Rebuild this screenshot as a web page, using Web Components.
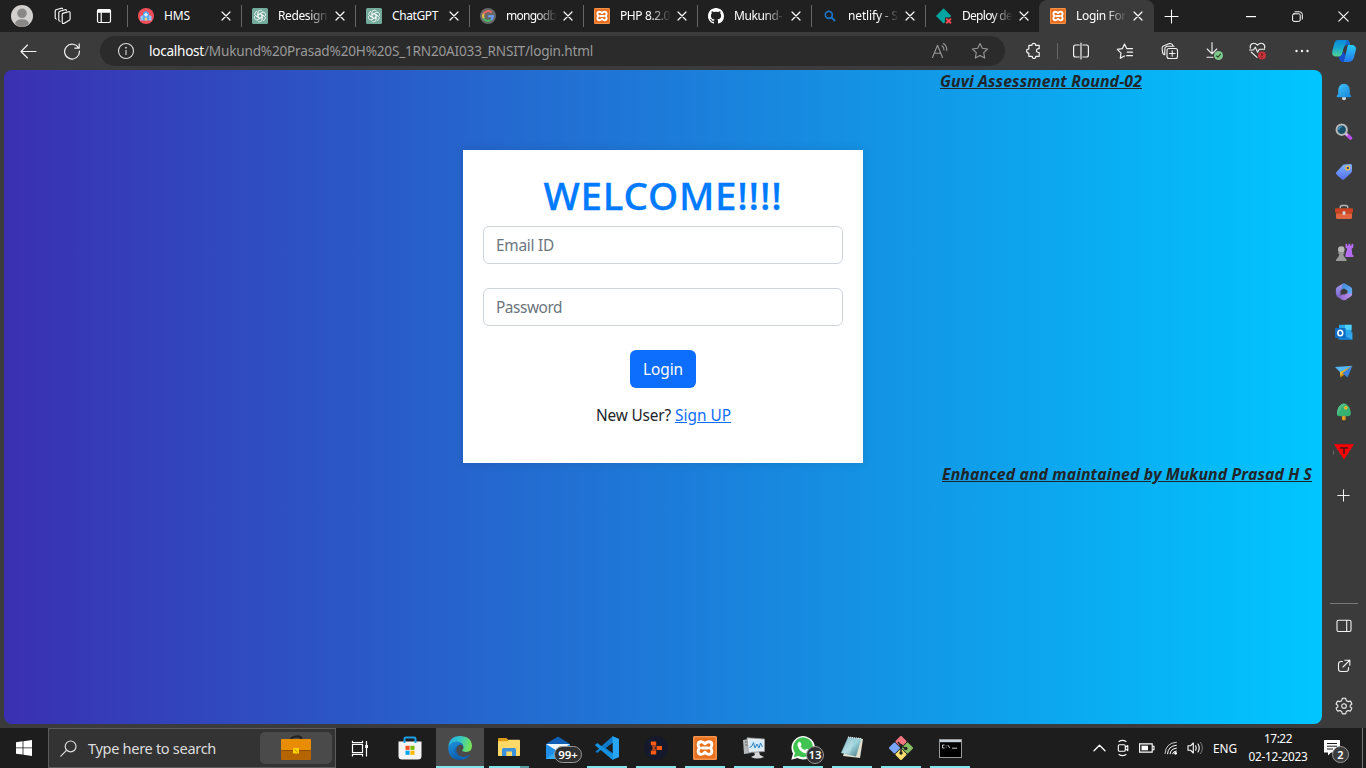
<!DOCTYPE html>
<html lang="en">
<head>
<meta charset="utf-8">
<title>Login Form</title>
<style>
html,body{margin:0;height:100%;overflow:hidden;background:#3b3b3b}
body{font-family:"Noto Sans","Open Sans",sans-serif}
</style>
</head>
<body>
<app-desktop></app-desktop>
<script>
const XAMPP = `<rect width="16" height="16" rx="1" fill="#e8701e"/><rect x=".5" y=".5" width="15" height="15" rx="1" fill="none" stroke="#f3934c"/><path d="M8 5.2Q7 3.8 5.5 3.8Q3.4 3.8 3.4 5.8Q3.4 7.2 4.5 8Q3.4 8.8 3.4 10.2Q3.4 12.2 5.5 12.2Q7 12.2 8 10.8Q9 12.2 10.5 12.2Q12.6 12.2 12.6 10.2Q12.6 8.8 11.5 8Q12.6 7.2 12.6 5.8Q12.6 3.8 10.5 3.8Q9 3.8 8 5.2ZM6.2 8H9.8" fill="none" stroke="#fff" stroke-width="1.9" stroke-linejoin="round" stroke-linecap="round"/>`;
const GPT = `<rect width="16" height="16" rx="1.5" fill="#74aa9c"/><g fill="none" stroke="#fff" stroke-width=".75" transform="translate(8 8)">${[0,60,120,180,240,300].map(a=>`<path transform="rotate(${a})" d="M-2 1.1V-3.6Q-1.9 -5.9 .5 -5.9Q1.9 -5.8 2.6 -4.7M-2 -1.2L1.9 -3.4"/>`).join('')}</g>`;
const L = (d, w=1.1, extra='') => `<g fill="none" stroke="currentColor" stroke-width="${w}" stroke-linecap="round" stroke-linejoin="round"><path d="${d}"/></g>${extra}`;

/* name: [width, height, markup] */
const ICONS = {
  close: [10,10,L('M1 1L9 9M9 1L1 9',1.2)],
  avatar: [22,22,`<circle cx="11" cy="11" r="11" fill="#d2d0ce"/><circle cx="11" cy="8.3" r="4.8" fill="#8a8886"/><path d="M4 18.6Q5 14.2 11 14.2T18 18.6Q15 22 11 22T4 18.6Z" fill="#8a8886"/>`],
  workspaces: [18,18,L('M9.4 6.1L14.7 4.7Q16.1 4.5 16.1 5.9V12Q16.1 12.9 15.3 13.3L9.9 16.4Q8.2 16.9 8.2 15.6V7.3Q8.2 6.3 9.4 6.1M6.1 14.2Q4.8 14.2 4.8 13V5.5Q4.8 4.6 5.8 4.3L11.1 2.7Q12.3 2.5 12.4 3.6M2.3 12Q1.2 12 1.2 10.8V4Q1.2 3.1 2 2.7L7.3 1.2Q8.3 1 8.6 1.9',1.1)],
  tabactions: [16,16,L('M3 1.5H13Q14.5 1.5 14.5 3V13Q14.5 14.5 13 14.5H3Q1.5 14.5 1.5 13V3Q1.5 1.5 3 1.5ZM5.2 4.5V14.5',1.2,`<rect x="1.5" y="1.5" width="13" height="3.2" rx="1" fill="currentColor"/>`)],
  hms: [16,16,`<circle cx="8" cy="8" r="8" fill="#f04f5a"/><path d="M2.5 12.5V8.2L5 7V12.5ZM11 12.5V7L13.5 8.2V12.5Z" fill="#8ec8ff"/><path d="M5 12.5V5L8 2.8L11 5V12.5Z" fill="#53a7f5"/><path d="M7.3 5H8.7V8.5H7.3ZM6.2 6H9.8V7.4H6.2Z" fill="#e8f4ff"/><rect x="6.7" y="9.7" width="2.6" height="2.8" fill="#f7d26a"/>`],
  gpt: [16,16,GPT],
  google: [16,16,`<circle cx="8" cy="8" r="8" fill="#686868"/><g fill="none" stroke-width="2"><path d="M11.6 4.7A4.9 4.9 0 0 0 3.6 5.8" stroke="#ea6a60"/><path d="M3.6 5.8A4.9 4.9 0 0 0 3.6 10.2" stroke="#efc344"/><path d="M3.6 10.2A4.9 4.9 0 0 0 11.2 11.7" stroke="#4ab866"/><path d="M11.2 11.7A4.9 4.9 0 0 0 12.9 8.3H8.2" stroke="#6aa0f8"/></g>`],
  xampp: [16,16,XAMPP],
  github: [16,16,`<path fill="#fff" d="M8 0C3.58 0 0 3.58 0 8c0 3.54 2.29 6.53 5.47 7.59.4.07.55-.17.55-.38 0-.19-.01-.82-.01-1.49-2.01.37-2.53-.49-2.69-.94-.09-.23-.48-.94-.82-1.13-.28-.15-.68-.52-.01-.53.63-.01 1.08.58 1.23.82.72 1.21 1.87.87 2.33.66.07-.52.28-.87.51-1.07-1.78-.2-3.64-.89-3.64-3.95 0-.87.31-1.59.82-2.15-.08-.2-.36-1.02.08-2.12 0 0 .67-.21 2.2.82.64-.18 1.32-.27 2-.27s1.36.09 2 .27c1.53-1.04 2.2-.82 2.2-.82.44 1.1.16 1.92.08 2.12.51.56.82 1.27.82 2.15 0 3.07-1.87 3.75-3.65 3.95.29.25.54.73.54 1.48 0 1.07-.01 1.93-.01 2.2 0 .21.15.46.55.38A8.01 8.01 0 0 0 16 8c0-4.42-3.58-8-8-8z"/>`],
  bing: [16,16,`<g fill="none" stroke="#1a73c8" stroke-width="1.7"><circle cx="6.8" cy="6.8" r="3.5"/><path d="M9.4 9.4L13 13" stroke-width="2"/></g>`],
  netlify: [16,16,`<path d="M7.6 .3L15.2 7.9L7.6 15.5L0 7.9Z" fill="#05a6a1"/><path d="M9 9.5H16V16H9Z" fill="#212121"/><path d="M10.2 10.6L15 15.2M15 10.6L10.2 15.2" stroke="#ff4b55" stroke-width="1.9"/>`],
  plus: [15,15,L('M7.5 1V14M1 7.5H14',1.1)],
  plusSmall: [13,13,L('M6.5 .8V12.2M.8 6.5H12.2',1)],
  min: [11,11,'<rect x="0" y="5" width="10" height="1.2" fill="currentColor"/>'],
  restore: [11,11,L('M2 2.8H6.8Q8.2 2.8 8.2 4.2V9Q8.2 10.4 6.8 10.4H2Q.6 10.4 .6 9V4.2Q.6 2.8 2 2.8ZM3 .8H7.5Q10.3 .8 10.3 3.5V8',1)],
  wclose: [11,11,L('M.8 .8L10.2 10.2M10.2 .8L.8 10.2',1.1)],
  back: [17,15,L('M16 7.5H1M7.5 1L1 7.5L7.5 14',1.1)],
  reload: [18,18,L('M15.6 6.2A7.4 7.4 0 1 0 16.4 9M16.2 1.8V6.2H11.8',1.2)],
  info: [18,18,L('M16.5 9A7.5 7.5 0 1 1 1.5 9A7.5 7.5 0 1 1 16.5 9M9 8.2V12.5',1.1,'<circle cx="9" cy="5.7" r=".9" fill="currentColor"/>')],
  read: [18,18,L('M1.5 15.5L6.5 3.2L11.5 15.5M3.2 11.2H9.8M11 3.8Q13 5.2 13 8M12.5 1.5Q16 4 15.8 8.5',1.1)],
  star: [18,18,L('M9 1.5L11.3 6.3L16.5 7L12.7 10.7L13.7 16L9 13.5L4.3 16L5.3 10.7L1.5 7L6.7 6.3Z',1.1)],
  puzzle: [18,18,L('M4 3.3H7Q6.8 1.3 8.8 1.3T10.6 3.3H14.2V6.7Q12 6.3 11.5 8Q11.2 10.5 14.2 10.6V14.3H10.8Q10.8 16.5 9 16.5T7.2 14.3H3.8V11Q1.6 11 1.6 9T3.8 7.1V3.5',1.2)],
  split: [18,18,L('M7.2 3H3.5Q1.6 3 1.6 5V13Q1.6 15 3.5 15H7.2M10.8 3H14.5Q16.4 3 16.4 5V13Q16.4 15 14.5 15H10.8M9 1V17',1.2)],
  favs: [18,18,L('M8.5 14L4.3 16.3L5 11.2L1.3 7.4L6.3 6.7L8.5 2L10.8 6.7H16.5M11.3 10.2H16.5M10.7 13.7H16.5',1.2)],
  collections: [18,18,L('M8 6.5H14.5Q16.5 6.5 16.5 8.5V14.5Q16.5 16.5 14.5 16.5H8Q6 16.5 6 14.5V8.5Q6 6.5 8 6.5ZM11.2 8.8V14.2M8.5 11.5H14M3.6 12.8Q2 12.2 1.6 10.5L1.1 6.5Q1 4.2 3 3.8L8.5 1.6Q11 1 12 3.8M3.8 12.5V7.2Q3.8 4.2 7 4.2H13',1.1)],
  download: [20,20,L('M8 1.5V12.5M3.2 8L8 12.8L12.8 8M3 16.3H9',1.1,'<circle cx="14.5" cy="14.5" r="4.5" fill="#7fc98b"/><path d="M12.3 14.6L13.9 16.2L16.8 12.9" fill="none" stroke="#25452b" stroke-width="1.1"/>')],
  heart: [20,20,L('M2.4 7.2Q1.5 4.2 4 2.7Q7 1.4 9.5 4.2Q12 1.4 15 2.7Q17.5 4.2 16.6 7.2M1.5 9H5.5L7.3 6.2L9.6 11.2L11.3 8.2H16.5M3.2 11L9 16.3',1.1,'<circle cx="14" cy="14.5" r="4" fill="#c4323a"/><path d="M14 12.2V15" stroke="#411" stroke-width="1"/><circle cx="14" cy="16.5" r=".6" fill="#411"/>')],
  more: [16,4,'<circle cx="2.5" cy="2" r="1.2" fill="currentColor"/><circle cx="8" cy="2" r="1.2" fill="currentColor"/><circle cx="13.5" cy="2" r="1.2" fill="currentColor"/>'],
  copilot: [24,24,`<defs><linearGradient id="a" x2="0" y2="1"><stop stop-color="#0b8ad8"/><stop offset=".5" stop-color="#18a9ce"/><stop offset="1" stop-color="#54d68d"/></linearGradient><linearGradient id="b" x2="0" y2="1"><stop stop-color="#28c9f2"/><stop offset="1" stop-color="#2379ec"/></linearGradient></defs><path d="M15.8 6H20Q24.6 6.4 23.9 11L21.9 18.5Q20.7 22.9 16.8 22.9H11.5L13.6 15Z" fill="url(#b)"/><path d="M5.8 1H14.8Q17.6 1.2 18.2 6H15.6Q12.7 6 11.8 9.2L10.3 14.5Q9.4 17.6 6.5 17.6H4Q-.6 17.2.3 12.6L2.2 4.8Q3.1 1.2 5.8 1Z" fill="url(#a)"/><path d="M14.8 1Q17.6 1.2 18.2 6H15.6Q13.5 6 12.4 7.5Z" fill="#1567cd"/><path d="M6.5 17.6Q9.4 17.6 10.3 14.5L11 12.2L13.5 15.5L11.5 22.9H10.2Q7.6 22.6 6.5 17.6Z" fill="#1550cc"/><path d="M11.8 9.2L12.4 7.5Q13.6 6 15.6 6L13.5 15.5L11 12.2Z" fill="#3b3b3b"/>`],
  bell: [16,18,`<defs><linearGradient id="a" x2="1" y2="1"><stop stop-color="#40c4f7"/><stop offset="1" stop-color="#1683d8"/></linearGradient></defs><circle cx="8" cy="15.3" r="2" fill="#d8d8d8"/><path d="M8 .8Q13.8 1.2 13.8 8V11L15.3 13Q15.5 14.3 14.3 14.3H1.7Q.5 14.3 .7 13L2.2 11V8Q2.2 1.2 8 .8Z" fill="url(#a)"/>`],
  search3d: [18,18,`<path d="M11 11L15.5 15" stroke="#b94ee8" stroke-width="3.6" stroke-linecap="round"/><path d="M10 10L12.5 12.3" stroke="#ccc" stroke-width="2"/><circle cx="6.7" cy="6.7" r="5.2" fill="#1b5069" stroke="#b9b9b9" stroke-width="2"/><path d="M3.6 6.8Q4 4 6.8 3.6" stroke="#3d9ccc" fill="none" stroke-width="1.4"/>`],
  tag: [18,18,`<defs><linearGradient id="a" x2="0" y2="1"><stop stop-color="#80b2ff"/><stop offset="1" stop-color="#5471ed"/></linearGradient></defs><path d="M9.5 1.6L15.4 1Q17 1 17 2.6V7.6Q17 9 16 10L9.3 16.3Q8 17.3 6.7 16.2L1.5 11.5Q.4 10.3 1.5 9L7.5 2.5Q8.3 1.7 9.5 1.6Z" fill="url(#a)"/><circle cx="12.8" cy="5" r="1.9" fill="#3548a8" stroke="#f5c63b" stroke-width="1.3"/>`],
  toolbox: [18,16,`<path d="M5.3 4.5V3.2Q5.3 1.6 7 1.6H11Q12.7 1.6 12.7 3.2V4.5" fill="none" stroke="#b6b6b6" stroke-width="1.5"/><rect x="1" y="8" width="16" height="7" rx="1.2" fill="#e1643e"/><path d="M1.2 4.3H16.8Q18 4.3 18 5.5V8.3H0V5.5Q0 4.3 1.2 4.3Z" fill="#cd4322"/><path d="M.5 9H17.5" stroke="#a93318"/><rect x="7.6" y="7.3" width="2.8" height="3.6" rx=".8" fill="#cfd6da"/>`],
  chess: [19,19,`<path d="M10.5 .8H12V2.4H13.4V.8H15.2V2.4H16.6V.8H18.3V4.4L16.6 5.8L17.4 12H18.4V14H10.4V12L12.2 5.8L10.5 4.4Z" fill="#b66cf0"/><circle cx="6.3" cy="6.5" r="3.3" fill="#b7b7b7"/><path d="M3.2 9.2H9.4V10.8H8.3Q8.4 13.5 10.3 15.2Q11.6 16 11.6 18H1Q1 16 2.3 15.2Q4.2 13.5 4.3 10.8H3.2Z" fill="#999"/>`],
  m365: [18,18,`<defs><linearGradient id="a" x2="0" y2="1"><stop stop-color="#a79bef"/><stop offset="1" stop-color="#7a66d0"/></linearGradient><linearGradient id="c" x2="1"><stop stop-color="#7a5fcb"/><stop offset="1" stop-color="#c693ea"/></linearGradient><linearGradient id="b" x2="1" y2="1"><stop stop-color="#3e86d8"/><stop offset="1" stop-color="#6bb0f5"/></linearGradient></defs><path d="M9.5 .4L6.3 7Q5.6 8 5.6 9V12.2L3.2 13.6Q.9 12.6 .9 10.5V6.3Q.9 4.8 2.3 3.9L7.2 .9Q8.3 .3 9.5 .4Z" fill="url(#a)"/><path d="M7.6 .8Q9 .1 10.3 .8L15.8 4Q17.1 4.8 17.1 6.3V11Q17 12.4 15.5 13L12.4 11.4V7.7L8.9 5.6L6 7.2Z" fill="url(#b)"/><path d="M1.3 12.2Q3 13.7 5.3 12.5L12.4 8.8V11.2L17 10.5Q17 12.7 15.8 13.5L10.4 16.9Q9 17.7 7.6 16.9L2.6 13.9Q1.6 13.2 1.3 12.2Z" fill="url(#c)"/><path d="M9 5.8L12.2 7.6V9.9L9 11.8L5.8 10.6V7.6Z" fill="#3b3b3b"/>`],
  outlook: [18,17,`<rect x="4" y=".8" width="12.5" height="12" fill="#28a8ea"/><rect x="10" y=".8" width="6.5" height="5" fill="#50d1fa"/><path d="M3.5 9L10 12L17.3 8.2V15.8H3.5Z" fill="#1383da"/><path d="M17.3 8.2V15.8L10.5 12Z" fill="#35a9ef"/><rect x="0" y="4" width="10.6" height="10" rx="1" fill="#0c6cc4"/><ellipse cx="5.3" cy="9" rx="2.4" ry="2.7" fill="none" stroke="#fff" stroke-width="1.6"/>`],
  plane: [18,14,`<path d="M0 2L17.5 .8L5.2 7.3Z" fill="#54b7f5"/><path d="M17.5 .8L4.8 7.3L5.6 12.6L8 8.5Z" fill="#f4b52a"/><path d="M17.5 .8L7.5 8L12.5 12.5Z" fill="#3b82df"/><path d="M5.6 12.6L7.5 8L9.3 9.7Z" fill="#c98a13"/>`],
  tree: [16,18,`<rect x="6" y="11" width="3.6" height="6.3" rx="1" fill="#e89b22"/><path d="M8 .5Q12.5 1 14.3 7Q16 13.2 12 13.2H3.6Q-.2 13.2 1.5 7Q3.3 1 8 .5Z" fill="#36b172"/><path d="M8 .5Q3.3 1 1.5 7Q.2 11.6 2 12.8Q3.5 5 10 1.2Z" fill="#4dbf87"/><path d="M9.8 2.6L12 4.8L9.8 7L7.6 4.8Z" fill="#ffc938"/><circle cx="9.8" cy="4.8" r=".8" fill="#c17b12"/>`],
  tri: [22,18,`<path d="M.5 7.5V11.5" stroke="#777" stroke-width=".8"/><path d="M1 1.2H21L11 16.5Z" fill="#fb0006"/><path d="M7 4H15V5.8H12V11H10V5.8H7Z" fill="#611"/>`],
  panel: [16,14,L('M2.5 1.3H13.5Q15 1.3 15 2.8V11Q15 12.5 13.5 12.5H2.5Q1 12.5 1 11V2.8Q1 1.3 2.5 1.3ZM10.7 1.3V12.5',1.1)],
  ext: [14,14,L('M5.5 2.5H4Q1.5 2.5 1.5 5V10Q1.5 12.5 4 12.5H9Q11.5 12.5 11.5 10V8.5M7.8 1.2H12.8V6.2M12.8 1.2L6 8',1.1)],
  gear: [18,18,L('M7.3 1.4Q9 1 10.7 1.4L11.3 3.7L13 4.6L15.2 4Q16.4 5.2 16.9 7L15.2 8.4V9.8L16.9 11.2Q16.4 12.9 15.2 14.1L13 13.5L11.4 14.4L10.7 16.7Q9 17.1 7.3 16.7L6.6 14.4L5 13.5L2.8 14.1Q1.6 12.9 1.1 11.2L2.8 9.8V8.4L1.1 7Q1.6 5.2 2.8 4L5 4.6L6.7 3.7ZM11.3 9A2.3 2.3 0 1 1 6.7 9A2.3 2.3 0 1 1 11.3 9',1.1)],
  windows: [16,16,`<path d="M0 2.3L6.6 1.3V7.5H0ZM7.4 1.2L16 0V7.5H7.4ZM0 8.3H6.6V14.6L0 13.7ZM7.4 8.3H16V16L7.4 14.8Z" fill="#fff"/>`],
  find: [17,17,L('M16 6.4A5.4 5.4 0 1 1 5.2 6.4A5.4 5.4 0 1 1 16 6.4M6.7 10.2L.8 16.1',1.2)],
  briefcase: [32,26,`<path d="M11 4Q11.5 2.2 16 1.5Q21 1 21.5 4" fill="none" stroke="#222" stroke-width="2.2"/><rect x="1" y="4" width="30" height="21" rx="1" fill="#b56500"/><path d="M1 5Q1 4 2 4H30Q31 4 31 5V15H1Z" fill="#e88c00"/><path d="M1 15.5H31" stroke="#8f4e00"/><rect x="13" y="13" width="6" height="5.5" rx=".7" fill="#ffd400"/><path d="M14.5 14.5L17.5 17" stroke="#c98a00"/>`],
  taskview: [18,17,`<g fill="none" stroke="#fff" stroke-width="1.2"><path d="M1.5 4.5H11.5V12.5H1.5ZM1.5 .8V2.7H11.5V.8M1.5 16.4V14.4H11.5V16.4M15.5 1V16.5"/></g><rect x="14.2" y="5" width="2.8" height="3" fill="#fff"/>`],
  store: [24,24,`<path d="M6.5 7V2.8Q6.5 1.5 7.8 1.5H16.2Q17.5 1.5 17.5 2.8V7" fill="none" stroke="#1da0e8" stroke-width="2"/><path d="M.5 5.5H23.5V20Q23.5 23.5 20 23.5H4Q.5 23.5 .5 20Z" fill="#f4f4f4"/><path d="M7.5 9.8H11.6V13.9H7.5Z" fill="#f25022"/><path d="M12.4 9.8H16.5V13.9H12.4Z" fill="#7fba00"/><path d="M7.5 14.7H11.6V18.8H7.5Z" fill="#00a4ef"/><path d="M12.4 14.7H16.5V18.8H12.4Z" fill="#ffb900"/><path d="M6.5 5V7M17.5 5V7" stroke="#1da0e8" stroke-width="2"/>`],
  edge: [24,24,`<defs><linearGradient id="a" x2="1" y2=".2"><stop stop-color="#29a9e8"/><stop offset=".5" stop-color="#32c6ca"/><stop offset="1" stop-color="#73e25a"/></linearGradient><linearGradient id="b" x2=".6" y2="1"><stop stop-color="#1c93dd"/><stop offset="1" stop-color="#0c55a5"/></linearGradient></defs><path d="M.3 11Q1 .2 12 0Q23.6.4 24 10Q23.8 15.8 18 16Q14.5 16 14 14.6Q15.7 13.2 15.5 11Q14.6 6 9 5.8Q3.4 5.8.3 11Z" fill="url(#a)"/><path d="M.2 11.5Q3 5.5 9.3 5.8Q14 6 15.4 10Q12.5 7.8 10 9.7Q6.6 12.5 9 17.8Q13 24 20 19.6L22.3 18.3Q18.5 24 12 24Q.2 23.5.2 11.5Z" fill="url(#b)"/><path d="M9.5 10Q7 13 9 17.8Q13 23 20 19.6L22 18.6Q19.5 22.5 15.5 23.4Q7 23 6.4 16Q6.4 12 9.5 10Z" fill="#1066b6"/>`],
  explorer: [22,20,`<path d="M0 1Q0 0 1 0H8.5L10.5 2H21Q22 2 22 3V17Q22 18 21 18H1Q0 18 0 17Z" fill="#dc9c15"/><path d="M0 3.3H9L11 1.8H21Q22 1.8 22 3V17Q22 18 21 18H1Q0 18 0 17Z" fill="#ffd968"/><path d="M4 18V11.5Q4 10 5.5 10H16.5Q18 10 18 11.5V18H14V13.5H8.3V18Z" fill="#3a92dc"/>`],
  mail: [26,24,`<path d="M1 8L13 .5L25 8V22H1Z" fill="#1160b5"/><path d="M1 8L13 15.5L25 8V23H1Z" fill="#1f8fe8"/><path d="M1 8H25L13 15.5Z" fill="#f1f7fd"/><path d="M1 23L13 14L25 23Z" fill="#35adf3"/>`],
  vscode: [24,24,`<path d="M17.5 .3L24 3V21L17.5 23.8L6.5 13.6L2.3 17L.3 15.8L15.5 2Z" fill="#0f79c7"/><path d="M17.5 .3L24 3V21L17.5 23.8Z" fill="#28a5f2"/><path d="M17.7 6.7V17.2L10.8 12Z" fill="#1d1d1d"/><path d="M.3 8.4L2.3 7L17.5 18.5V23.8L.3 9.6Z" fill="#1693e0"/>`],
  orange: [24,24,`<circle cx="12" cy="12" r="12" fill="#15192b"/><path d="M6.8 5.4H12.2V9.3H6.8ZM6.8 14.6H12.2V18.6H6.8ZM12.6 9.9H18V14H12.6Z" fill="#ff5a14"/><path d="M8 9.3H12.2V10.4L10.5 12L12.2 13.5V14.6H8L8.6 12Z" fill="#c2461a"/>`],
  xamppBig: [24,24,`<g transform="scale(1.5)">${XAMPP}</g>`],
  monitor: [24,22,`<path d="M1 3L7 2L9 16L2 17Z" fill="#b5b8ba"/><path d="M3 5H7M3 8H7" stroke="#666"/><path d="M5 .8L22.5 2V14.5L6.5 15.5Z" fill="#e9ecee" stroke="#92979b" stroke-width=".8"/><path d="M7 3L20.8 3.8V12.8L8 13.5Z" fill="#d6ebf8"/><path d="M7.5 10.5L10 9L11.5 5.5L13 11L15 7L17 11L18.5 6L20.5 10" fill="none" stroke="#2a7ec2"/><path d="M12 15.5L17 15L18 18L22 20Q15 23 9 20L13 18Z" fill="#d4d6d8"/>`],
  whatsapp: [24,24,`<path d="M.3 23.7L2 17.6A11.7 11.7 0 1 1 6.4 22Z" fill="#fff"/><path d="M2.8 21.2L4 17A9.9 9.9 0 1 1 7.4 20Z" fill="#41c351"/><path d="M8 5.8Q9.3 5.2 10 7.2L10.5 8.7Q10.4 9.6 9.5 10.2Q10.9 13 14 14L15.3 12.8Q16 12.5 18.5 14.2Q18.8 17.3 15.7 17.6Q8.7 16.8 6.5 9.6Q6.3 7 8 5.8Z" fill="#fff"/>`],
  notepad: [24,24,`<defs><linearGradient id="a" x2="1" y2="1"><stop stop-color="#6da5b3"/><stop offset=".5" stop-color="#9fd5dd"/><stop offset="1" stop-color="#3d7380"/></linearGradient></defs><path d="M9 1.5L23 3L20 22L3 20Z" fill="#e2e0cf"/><path d="M8 1L21.5 2.5L16 20.5L1 17Z" fill="url(#a)"/><path d="M8 1.2L21.5 2.7" stroke="#dfe8e8" stroke-width="1.4" stroke-dasharray="1 1"/><path d="M8.5 2L2 16.5L10 18.3L14 4Z" fill="#fff" opacity=".2"/>`],
  git: [24,24,`<g transform="rotate(45 12 12)"><rect x="3.2" y="3.2" width="8.4" height="8.4" rx="1" fill="#f47681"/><rect x="12.4" y="3.2" width="8.4" height="8.4" rx="1" fill="#86bd62"/><rect x="3.2" y="12.4" width="8.4" height="8.4" rx="1" fill="#79a6fa"/><rect x="12.4" y="12.4" width="8.4" height="8.4" rx="1" fill="#fbe070"/></g><path d="M9 6L12 9.5V18M12 9.5L17 13" fill="none" stroke="#222" stroke-width="1.4"/><circle cx="12" cy="9.5" r="1.7" fill="#222"/><circle cx="12" cy="17" r="1.7" fill="#222"/><circle cx="16.8" cy="12.5" r="1.7" fill="#222"/>`],
  cmd: [23,19,`<rect x=".5" y=".5" width="22" height="18" fill="#000" stroke="#999"/><rect x="1" y="1" width="21" height="2.2" fill="#c8d2d8"/><path d="M5.5 6H3.5V9H5.5M7.2 6.5V7.2M7.2 8.4V9M8.8 6L10.8 9M13 9.2H18" stroke="#ddd" fill="none" stroke-width=".9"/>`],
  chevron: [13,8,L('M1 6.7L6.5 1.2L12 6.7',1.3)],
  meet: [14,18,L('M3.5 5.8H8Q9.3 5.8 9.3 7V11Q9.3 12.3 8 12.3H3.5Q2.3 12.3 2.3 11V7Q2.3 5.8 3.5 5.8ZM9.5 8.3L11.8 6.5V11.7L9.5 9.8M3 2.5Q6.5 .3 10 2.5M3 15.5Q6.5 17.7 10 15.5',1.1)],
  battery: [16,10,`<path d="M.6 .9H13.2V9.1H.6ZM13.2 3.2H15V6.8H13.2" fill="none" stroke="#fff" stroke-width="1.1"/><rect x="2.5" y="2.7" width="6.5" height="4.6" fill="#fff"/>`],
  wifi: [14,14,`<g fill="none" stroke="#fff" stroke-width="1"><path d="M1 13Q1.5 2 12.8 1.2" opacity=".75"/><path d="M3.5 13.2Q4 5 12.8 4.2"/><path d="M6 13.2Q6.5 7.8 12.8 7.1"/><path d="M8.4 13.2Q9 10.2 12.8 9.9"/></g><circle cx="11.6" cy="12.3" r="1.4" fill="#fff"/>`],
  volume: [17,14,L('M1 4.8H3.5L6.3 2V12L3.5 9.2H1ZM8.6 4.8Q10 7 8.6 9.2M11 3Q13.5 7 11 11',1.1,'<path d="M13.3 1Q17.5 7 13.3 13" fill="none" stroke="#777"/>')],
  notif: [16,16,`<path d="M0 0H16V12.5H7L4 15.5V12.5H0Z" fill="#fff"/><path d="M3 3.5H13M3 6.2H13M3 9H9" stroke="#1d1d1d"/>`]
};

class UiIcon extends HTMLElement {
  connectedCallback() {
    const [w, h, body] = ICONS[this.getAttribute('name')];
    const r = this.shadowRoot || this.attachShadow({mode:'open'});
    r.innerHTML = `<style>:host{display:block;flex:none;width:${w}px;height:${h}px}svg{display:block}</style><svg width="${w}" height="${h}" viewBox="0 0 ${w} ${h}">${body}</svg>`;
  }
}

/* One line of text, tracked so that it takes exactly the width given in w. */
class FitText extends HTMLElement {
  connectedCallback() {
    const r = this.shadowRoot || this.attachShadow({mode:'open'});
    const w = +this.getAttribute('w');
    r.innerHTML = `<style>:host{display:inline-block;flex:none;width:${w}px;white-space:pre}span{display:inline-block}:host([underline]) span{text-decoration:underline}</style><span><slot></slot></span>`;
    const s = r.querySelector('span');
    const n = this.textContent.length;
    s.style.letterSpacing = (w - s.getBoundingClientRect().width) / n + 'px';
  }
}

const define = (name, css, html) => customElements.define(name, class extends HTMLElement {
  connectedCallback() {
    if (this.shadowRoot) return;
    const t = document.createElement('template');
    t.innerHTML = `<style>*{box-sizing:border-box}${css}</style>${typeof html === 'function' ? html(this) : html}`;
    this.attachShadow({mode:'open'}).append(t.content.cloneNode(true));
  }
});
customElements.define('ui-icon', UiIcon);
customElements.define('fit-text', FitText);

define('browser-tab', `
:host{display:flex;box-sizing:border-box;width:114px;height:32px;align-items:center;padding-left:10px;border-left:1px solid transparent;
 border-image:linear-gradient(transparent 6px,#666 6px,#666 26px,transparent 26px) 1;color:#fff;font-size:12px}
:host([active]){width:115px;background:#3b3b3b;border-image:none;border-radius:8px 8px 0 0}
.t{width:50px;height:20px;line-height:20px;margin:0 7px 0 10px;overflow:hidden}
.fade{-webkit-mask:linear-gradient(90deg,#000 30px,transparent 51px)}`,
el => `<ui-icon name="${el.getAttribute('icon')}"></ui-icon><div class="t ${el.hasAttribute('fade')?'fade':''}"><fit-text w="${el.getAttribute('w')}">${el.getAttribute('label')}</fit-text></div><ui-icon name="close"></ui-icon>`);

define('tab-strip', `
:host{display:flex;height:32px;background:#202020;color:#fff;align-items:center}
.lead{display:grid;grid-template-columns:44px 37px 45px;width:127px;justify-items:center;align-items:center}
.plus{width:35px;display:grid;place-items:center}
.win{display:grid;grid-template-columns:46px 46px 46px;place-items:center;margin-left:auto}`,
`<div class="lead"><ui-icon name="avatar"></ui-icon><ui-icon name="workspaces"></ui-icon><ui-icon name="tabactions"></ui-icon></div>
<browser-tab icon="hms" label="HMS" w="26"></browser-tab>
<browser-tab icon="gpt" label="Redesign" w="49" fade></browser-tab>
<browser-tab icon="gpt" label="ChatGPT" w="46"></browser-tab>
<browser-tab icon="google" label="mongodb" w="50" fade></browser-tab>
<browser-tab icon="xampp" label="PHP 8.2.0" w="50" fade></browser-tab>
<browser-tab icon="github" label="Mukund-" w="48" fade></browser-tab>
<browser-tab icon="bing" label="netlify - S" w="50" fade></browser-tab>
<browser-tab icon="netlify" label="Deploy de" w="50" fade></browser-tab>
<browser-tab icon="xampp" label="Login For" w="50" fade active></browser-tab>
<div class="plus"><ui-icon name="plus"></ui-icon></div>
<div class="win"><ui-icon name="min"></ui-icon><ui-icon name="restore"></ui-icon><ui-icon name="wclose"></ui-icon></div>`);

define('tool-bar', `
:host{display:flex;height:38px;background:#3b3b3b;color:#f2f2f2;align-items:center}
.nav{display:grid;grid-template-columns:44px 44px;width:94px;padding-left:6px;place-items:center}
.addr{display:flex;align-items:center;width:905px;height:30px;margin-left:6px;border-radius:15px;background:#2b2b2b;padding-left:17px;font-size:13.6px;color:#999}
.host{color:#fff;margin-left:14px}.end{display:flex;gap:22px;margin:0 16px 0 auto;color:#999}
.addr fit-text{line-height:18px;padding-bottom:1px}
.cell{width:44.2px;display:grid;place-items:center}
.sep{width:1px;height:16px;background:#666;margin:0 1px}`,
`<div class="nav"><ui-icon name="back"></ui-icon><ui-icon name="reload"></ui-icon></div>
<div class="addr"><ui-icon name="info" style="color:#ddd"></ui-icon><fit-text class="host" w="55">localhost</fit-text><fit-text w="389">/Mukund%20Prasad%20H%20S_1RN20AI033_RNSIT/login.html</fit-text><div class="end"><ui-icon name="read"></ui-icon><ui-icon name="star"></ui-icon></div></div>
<div class="cell" style="margin-left:7px"><ui-icon name="puzzle"></ui-icon></div><div class="sep"></div>
${['split','favs','collections','download','heart','more'].map(n=>`<div class="cell"><ui-icon name="${n}"></ui-icon></div>`).join('')}
<div class="cell" style="width:40px"><ui-icon name="copilot"></ui-icon></div>`);

define('side-bar', `
:host{display:flex;flex-direction:column;width:44px;background:#3b3b3b;color:#f2f2f2;padding-top:2px}
.c{height:40px;display:grid;place-items:center;flex:none}.add{margin:3px 1px 0 0}
hr{width:28px;height:1px;border:0;background:#777;margin:auto auto 2px}.last{margin-bottom:2px}`,
`${['bell','search3d','tag','toolbox','chess','m365','outlook','plane','tree','tri'].map(n=>`<div class="c"><ui-icon name="${n}"></ui-icon></div>`).join('')}
<div class="c add"><ui-icon name="plusSmall"></ui-icon></div><hr>
<div class="c"><ui-icon name="panel"></ui-icon></div><div class="c"><ui-icon name="ext"></ui-icon></div><div class="c last"><ui-icon name="gear"></ui-icon></div>`);

define('form-field', `
:host{display:flex;box-sizing:border-box;height:38px;align-items:center;border:1px solid #ced4da;border-radius:6px;padding:0 12px;background:#fff;color:#6c757d;font-size:15.4px}`,
el => `<fit-text w="${el.getAttribute('w')}">${el.getAttribute('hint')}</fit-text>`);

define('login-card', `
:host{display:flex;flex-direction:column;box-sizing:border-box;width:400px;height:313px;padding:20px;background:#fff;box-shadow:0 0 10px rgba(0,0,0,.1);color:#212529;font-size:15.4px}
h1{margin:0 0 8px;height:48px;font-weight:500;font-size:38.6px;line-height:50px;color:#007bff;text-align:center;-webkit-text-stroke:.3px #007bff}
form-field{margin-bottom:24px}
button{align-self:center;width:66px;height:38px;padding:0;border:0;border-radius:6px;background:#0d6efd;color:#fff;font:inherit}
p{margin:16px 0 0 1px;line-height:24px;display:flex;justify-content:center;gap:4px}
a{color:#0d6efd}`,
`<h1><fit-text w="239">WELCOME!!!!</fit-text></h1>
<form-field hint="Email ID" w="58"></form-field><form-field hint="Password" w="66"></form-field>
<button type="button"><fit-text w="40">Login</fit-text></button>
<p><fit-text w="75">New User?</fit-text><a><fit-text w="56" underline>Sign UP</fit-text></a></p>`);

define('login-page', `
:host{display:flex;flex-direction:column;box-sizing:border-box;width:1318px;height:654px;margin-left:4px;border-radius:8px;background:linear-gradient(to right,#3a30b1,#00c6ff);color:#212529;font-size:15px}
.n{font-family:"Open Sans","Noto Sans",sans-serif;font-weight:700;font-style:italic;font-size:15.8px;line-height:23px;height:24px}
.top{margin:0 0 56px 936px}.bot{margin-left:938px}
login-card{margin-left:459px}`,
`<div class="n top"><fit-text w="202" underline>Guvi Assessment Round-02</fit-text></div><login-card></login-card><div class="n bot"><fit-text w="370" underline>Enhanced and maintained by Mukund Prasad H S</fit-text></div>`);

define('task-button', `
:host{position:relative;display:grid;width:49px;height:40px;place-items:center}
:host([active]){background:linear-gradient(#4a4a4a,#4a4a4a) 0 0/48px 40px no-repeat}
.u{position:absolute;left:4px;bottom:0;width:40px;height:2px;background:#85e3ec}
:host([active]) .u{left:0;width:48px}:host([multi]) .u{background:linear-gradient(90deg,#85e3ec 31px,#5b9a9f 31px)}
ui-icon{margin-right:1px}
.b{position:absolute;left:27px;top:18px;min-width:18px;height:18px;box-sizing:border-box;border:1px solid #999;border-radius:9px;background:#303030;color:#fff;font-weight:600;font-size:11.5px;line-height:16px;text-align:center}
.b.w{left:20px;width:28px;height:17px;line-height:15px}`,
el => { const b = el.getAttribute('badge'); return `<ui-icon name="${el.getAttribute('icon')}"></ui-icon>${b?`<div class="b ${b.length>2?'w':''}">${b}</div>`:''}${el.hasAttribute('open')?'<div class="u"></div>':''}`; });

define('task-bar', `
:host{display:flex;height:40px;background:#1d1d1d;color:#fff;align-items:center}
.start{width:48px;display:grid;place-items:center}
.s{width:288px;height:40px;border:1px solid #5c5c5c;background:#333;display:flex;align-items:center;padding:0 3px 0 11px;font-size:14.6px;color:#ddd}
.s fit-text{margin-left:11px}.hl{margin-left:auto;width:72px;height:32px;border-radius:5px;background:#4a4a4a;display:grid;place-items:center}
.apps{display:flex}
.tray{display:flex;align-items:center;margin-left:auto;font-size:11.8px}
.tray .c{width:24px;display:grid;place-items:center}
.clock{width:60px;margin:0 16px 0 11px;text-align:center;line-height:18px;padding-bottom:2px}.clock div{height:18px}
.nt{position:relative;width:38px;height:40px;display:flex;align-items:center}
.bd{position:absolute;left:8px;top:18px;width:17px;height:17px;box-sizing:border-box;border:1px solid #999;border-radius:50%;background:#3c3c3c;line-height:15px;text-align:center;font-weight:600;font-size:11px}
.end{width:4px;height:40px;border-left:1px solid #777}`,
`<div class="start"><ui-icon name="windows"></ui-icon></div>
<div class="s"><ui-icon name="find"></ui-icon><fit-text w="128">Type here to search</fit-text><div class="hl"><ui-icon name="briefcase"></ui-icon></div></div>
<div class="apps"><task-button icon="taskview"></task-button><task-button icon="store" style="width:51px"></task-button><task-button icon="edge" open active></task-button><task-button icon="explorer" open multi></task-button><task-button icon="mail" badge="99+"></task-button><task-button icon="vscode" open></task-button><task-button icon="orange" open></task-button><task-button icon="xamppBig" open></task-button><task-button icon="monitor" open></task-button><task-button icon="whatsapp" badge="13" open></task-button><task-button icon="notepad" open></task-button><task-button icon="git" open></task-button><task-button icon="cmd" open></task-button></div>
<div class="tray">${['chevron','meet','battery','wifi','volume'].map(n=>`<div class="c"><ui-icon name="${n}"></ui-icon></div>`).join('')}
<fit-text w="24" style="margin:0 0 1px 6px">ENG</fit-text>
<div class="clock"><div><fit-text w="28">17:22</fit-text></div><div><fit-text w="59">02-12-2023</fit-text></div></div>
<div class="nt"><ui-icon name="notif"></ui-icon><div class="bd">2</div></div><div class="end"></div></div>`);

define('app-desktop', `
:host{display:flex;flex-direction:column;width:1366px;height:768px;overflow:hidden;background:#3b3b3b}
main{display:flex;height:658px}`,
`<tab-strip></tab-strip><tool-bar></tool-bar><main><login-page></login-page><side-bar></side-bar></main><task-bar></task-bar>`);
</script>
</body>
</html>
